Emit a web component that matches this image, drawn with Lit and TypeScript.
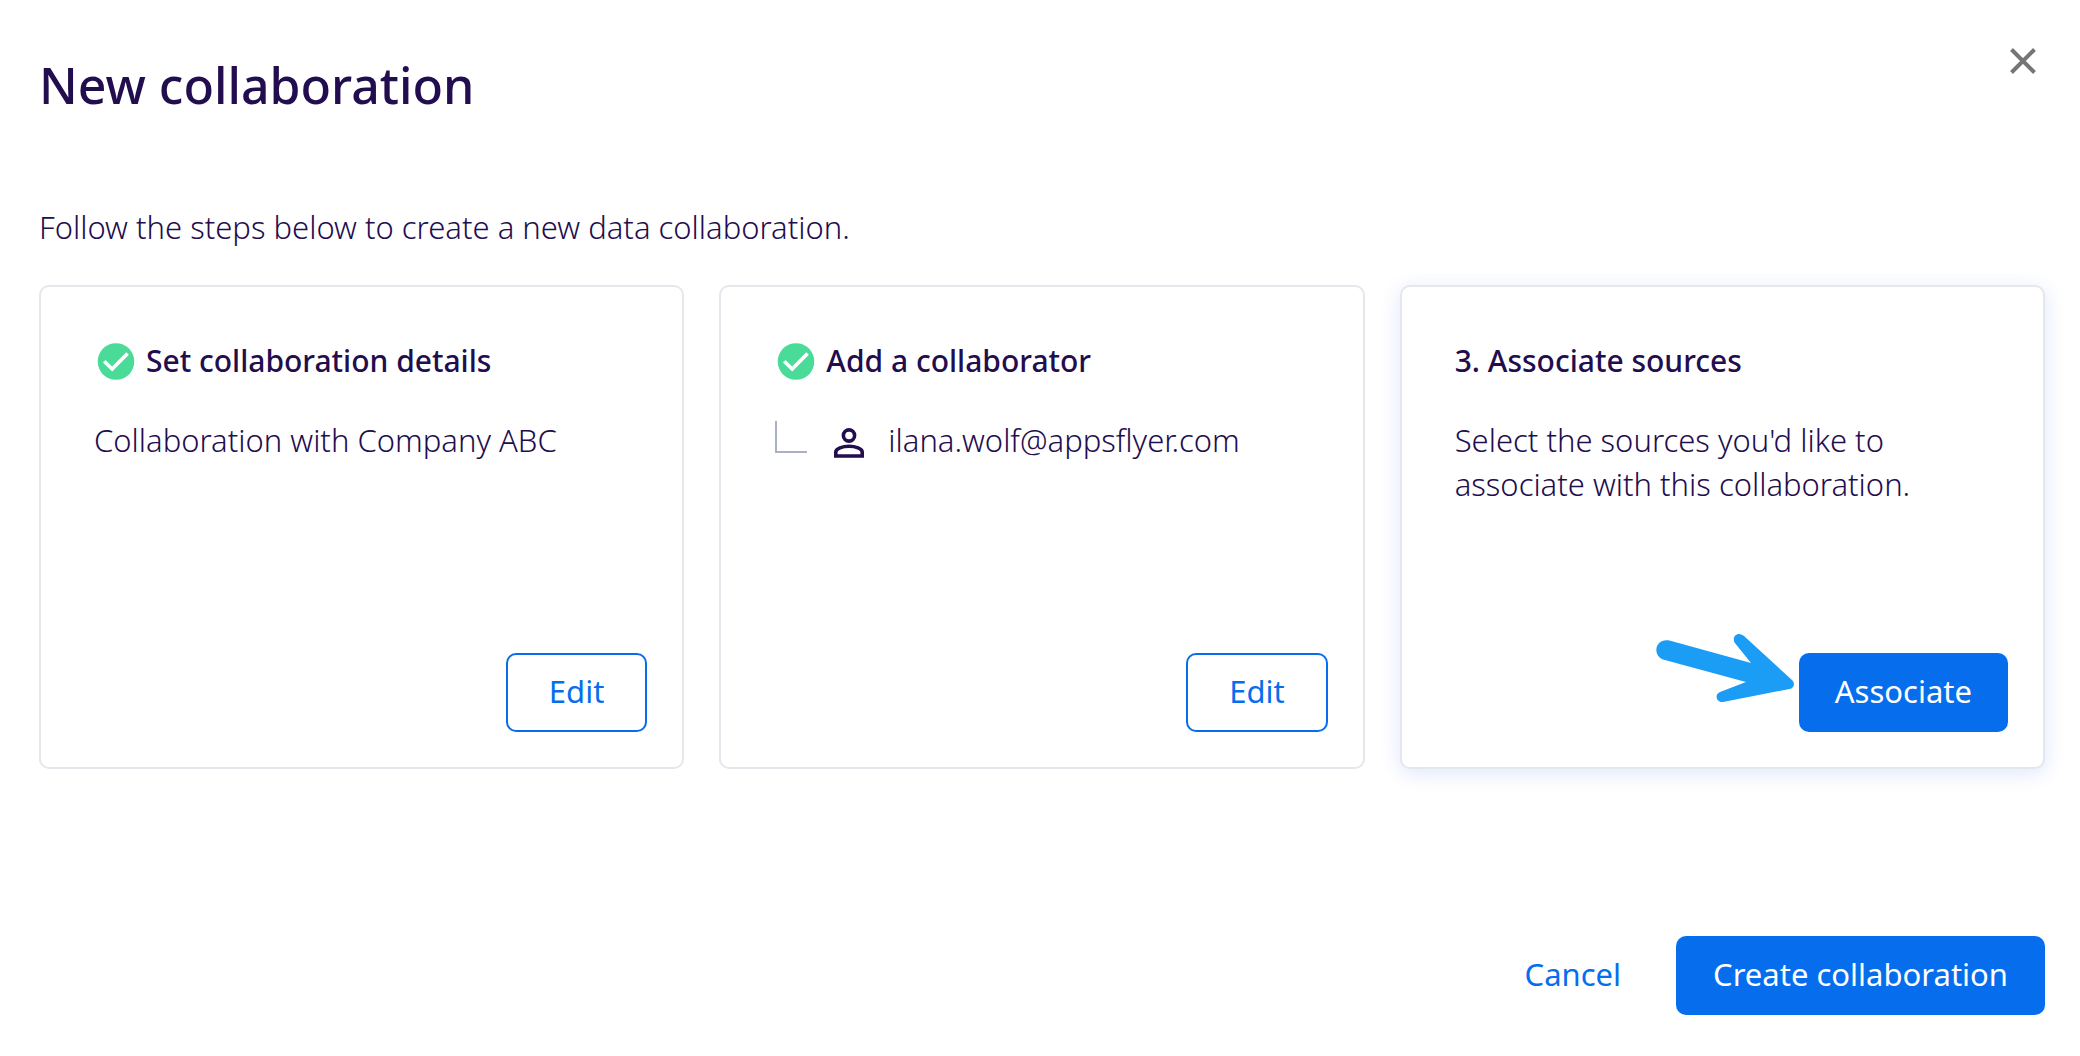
import { LitElement, html, css, nothing } from "lit";
import { customElement, property } from "lit/decorators.js";

const checkIcon = html`<svg class="check" viewBox="0 0 44 44" aria-hidden="true">
  <circle cx="22" cy="22.5" r="18.3" fill="#4adb99" />
  <path d="M10.2 22.3 L18.2 30 L33.6 14.4" fill="none" stroke="#fff" stroke-width="3.6" />
</svg>`;

const personIcon = html`<svg class="person" viewBox="0 0 30 30" aria-hidden="true">
  <g fill="none" stroke="#220d4e" stroke-width="3.6">
    <circle cx="15" cy="7.5" r="5.6" />
    <path d="M1.8 28 V24 C1.8 20.5 8.5 18.3 15 18.3 S28.2 20.5 28.2 24 V28 Z" />
  </g>
</svg>`;

const arrowIcon = html`<svg class="pointer" viewBox="0 0 138 70" aria-hidden="true">
  <path
    fill="#1b9cf5"
    d="M13.5 1.5 L95 24 L78.5 3.5 C76.5 -1 79 -5 83 -5 C85 -5 86.500 -4 88 -3 L136 41 C139.5 44.5 138 49.5 133.5 50 L67 63 C60.5 63.5 58 55.5 64 53 L90 43 L7 20.5 C-4 16 -1 -1 13.5 1.5 Z"
  />
</svg>`;

@customElement("step-card")
export class StepCard extends LitElement {
  @property() heading = "";
  @property() action = "";
  @property({ type: Boolean }) done = false;
  @property({ type: Boolean, reflect: true }) current = false;

  static styles = css`
    :host {
      display: flex;
      flex-direction: column;
      box-sizing: border-box;
      min-height: 484px;
      padding: 52px 35px 35px 53px;
      border: 2px solid #e6e7ed;
      border-radius: 10px;
      background: #fff;
    }
    :host([current]) {
      box-shadow: 0 4px 20px rgba(6, 80, 237, 0.14);
    }
    .heading {
      display: flex;
      align-items: center;
      gap: 8px;
      margin: 0 0 35px;
      font-size: 30px;
      line-height: 44px;
      font-weight: 500;
    }
    .check {
      width: 44px;
      height: 44px;
      flex: none;
    }
    .body {
      flex: 1;
    }
    .footer {
      display: flex;
      justify-content: flex-end;
    }
    .action {
      position: relative;
    }
    button {
      box-sizing: border-box;
      height: 79px;
      padding: 0 41px 4px;
      border: 2px solid #066eed;
      border-radius: 10px;
      background: #fff;
      color: #066eed;
      font: inherit;
      font-weight: 400;
      cursor: pointer;
    }
    :host([current]) button {
      padding: 0 34px 4px;
      background: #066eed;
      color: #fff;
    }
    .pointer {
      position: absolute;
      right: calc(100% + 5px);
      top: -14px;
      width: 138px;
      height: 70px;
      overflow: visible;
      pointer-events: none;
    }
  `;

  render() {
    return html`
      <h2 class="heading">${this.done ? checkIcon : nothing}<span>${this.heading}</span></h2>
      <div class="body"><slot></slot></div>
      <div class="footer">
        <div class="action">
          ${this.current ? arrowIcon : nothing}
          <button type="button">${this.action}</button>
        </div>
      </div>
    `;
  }
}

@customElement("app-root")
export class AppRoot extends LitElement {
  static styles = css`
    :host {
      display: block;
      box-sizing: border-box;
      min-height: 100vh;
      padding: 41px 35px 41px 39px;
      background: #fff;
      color: #220d4e;
      font-family: "Noto Sans", "Open Sans", sans-serif;
      font-size: 31px;
      line-height: 44px;
      font-weight: 300;
    }
    .top {
      display: flex;
      justify-content: space-between;
      align-items: flex-start;
    }
    .title {
      margin: 8px 0 0;
      font-size: 50px;
      line-height: 72px;
      font-weight: 500;
    }
    .close {
      display: flex;
      padding: 6px 8px;
      border: 0;
      background: none;
      cursor: pointer;
    }
    .close svg {
      width: 28px;
      height: 28px;
    }
    .intro {
      margin: 84px 0 36px;
    }
    .steps {
      display: grid;
      grid-template-columns: repeat(3, 1fr);
      gap: 35px;
    }
    .text {
      margin: 0;
    }
    .member {
      display: flex;
      align-items: flex-start;
    }
    .branch {
      box-sizing: border-box;
      width: 32px;
      height: 32px;
      margin: 3px 27px 0 1px;
      border-left: 2px solid #aab1c4;
      border-bottom: 2px solid #aab1c4;
    }
    .person {
      width: 30px;
      height: 30px;
      margin: 10px 24px 0 0;
    }
    .footer {
      display: flex;
      justify-content: flex-end;
      gap: 18px;
      margin-top: 167px;
    }
    .footer button {
      height: 79px;
      padding: 0 37px 4px;
      border: 0;
      border-radius: 10px;
      font: inherit;
      font-weight: 400;
      cursor: pointer;
    }
    .footer .cancel {
      background: none;
      color: #066eed;
    }
    .footer .create {
      background: #066eed;
      color: #fff;
    }
  `;

  render() {
    return html`
      <header class="top">
        <h1 class="title">New collaboration</h1>
        <button class="close" type="button" aria-label="Close">
          <svg viewBox="0 0 28 28" aria-hidden="true">
            <path d="M2.5 2.5 L25.5 25.5 M25.5 2.5 L2.5 25.5" fill="none" stroke="#757575" stroke-width="4" />
          </svg>
        </button>
      </header>
      <p class="intro">Follow the steps below to create a new data collaboration.</p>
      <main class="steps">
        <step-card heading="Set collaboration details" action="Edit" done>
          <p class="text">Collaboration with Company ABC</p>
        </step-card>
        <step-card heading="Add a collaborator" action="Edit" done>
          <div class="member">
            <span class="branch"></span>${personIcon}<span>ilana.wolf@appsflyer.com</span>
          </div>
        </step-card>
        <step-card heading="3. Associate sources" action="Associate" current>
          <p class="text">Select the sources you'd like to associate with this collaboration.</p>
        </step-card>
      </main>
      <footer class="footer">
        <button class="cancel" type="button">Cancel</button>
        <button class="create" type="button">Create collaboration</button>
      </footer>
    `;
  }
}
